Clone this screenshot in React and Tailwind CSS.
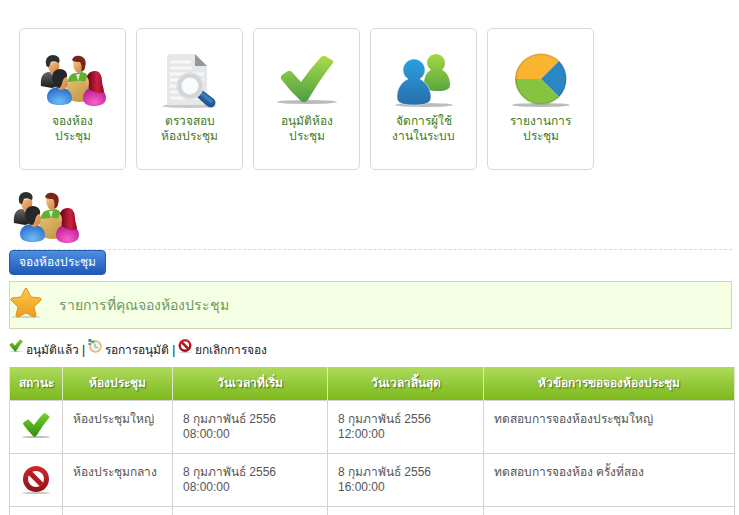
import { Fragment } from 'react'

const menuItems = [
  { icon: MeetingIcon, lines: ['จองห้อง', 'ประชุม'] },
  { icon: SearchDocIcon, lines: ['ตรวจสอบ', 'ห้องประชุม'] },
  { icon: CheckIcon, lines: ['อนุมัติห้อง', 'ประชุม'] },
  { icon: UsersIcon, lines: ['จัดการผู้ใช้', 'งานในระบบ'] },
  { icon: PieIcon, lines: ['รายงานการ', 'ประชุม'] },
]

const legend = [
  { icon: SmallCheckIcon, label: 'อนุมัติแล้ว' },
  { icon: ClockIcon, label: 'รอการอนุมัติ' },
  { icon: BlockIcon, label: 'ยกเลิกการจอง' },
]

const columns = [
  { label: 'สถานะ', width: 'w-[53px]' },
  { label: 'ห้องประชุม', width: 'w-[110px]' },
  { label: 'วันเวลาที่เริ่ม', width: 'w-[155px]' },
  { label: 'วันเวลาสิ้นสุด', width: 'w-[156px]' },
  { label: 'หัวข้อการขอจองห้องประชุม', width: '' },
]

const bookings = [
  {
    id: 1,
    status: 'approved',
    room: 'ห้องประชุมใหญ่',
    date: '8 กุมภาพันธ์ 2556',
    start: '08:00:00',
    end: '12:00:00',
    topic: 'ทดสอบการจองห้องประชุมใหญ่',
  },
  {
    id: 2,
    status: 'cancelled',
    room: 'ห้องประชุมกลาง',
    date: '8 กุมภาพันธ์ 2556',
    start: '08:00:00',
    end: '16:00:00',
    topic: 'ทดสอบการจองห้อง ครั้งที่สอง',
  },
]

function MeetingIcon({ className }) {
  return (
    <svg viewBox="0 0 66 52" className={className} aria-hidden="true">
      <defs>
        <linearGradient id="mSuit" x1="0" y1="0" x2="0" y2="1">
          <stop offset="0" stopColor="#666" />
          <stop offset="1" stopColor="#1c1c1c" />
        </linearGradient>
        <linearGradient id="mSkin" x1="0" y1="0" x2="1" y2="1">
          <stop offset="0" stopColor="#f9c98c" />
          <stop offset="1" stopColor="#c97a35" />
        </linearGradient>
        <radialGradient id="mBlue" cx="0.5" cy="0.8" r="0.75">
          <stop offset="0" stopColor="#6fbcf8" />
          <stop offset="1" stopColor="#2a6bca" />
        </radialGradient>
        <radialGradient id="mPink" cx="0.5" cy="0.8" r="0.75">
          <stop offset="0" stopColor="#f862cd" />
          <stop offset="1" stopColor="#b9188f" />
        </radialGradient>
        <linearGradient id="mTable" x1="0" y1="0" x2="1" y2="1">
          <stop offset="0" stopColor="#e2c173" />
          <stop offset="1" stopColor="#bd903d" />
        </linearGradient>
        <linearGradient id="mRed" x1="0" y1="0" x2="1" y2="0">
          <stop offset="0" stopColor="#5c0814" />
          <stop offset="0.6" stopColor="#cc2040" />
          <stop offset="1" stopColor="#8c0c20" />
        </linearGradient>
      </defs>
      {/* man at the back */}
      <path d="M1 31C0 22 3 18 8 17L19 18 21 30 12 33Z" fill="url(#mSuit)" />
      <path d="M10 16l4 8 4-8z" fill="#f4f4f4" />
      <path d="M7 8c1 6 3 11 7 11s6-5 5-12z" fill="url(#mSkin)" />
      <path d="M6 9C5 3 9 0 13 0c5 0 8 4 6 8-2-1-5-2-8-1-1 1-1 3-2 5-2 0-3-1-3-3z" fill="#2d2f31" />
      {/* woman at the back */}
      <path d="M28 27c0-6 4-9 8-9l6-1c5 1 8 5 6 10z" fill="#62b02f" />
      <path d="M36 19l2 7 2-7z" fill="#dff0cc" />
      <path d="M33 6c0 7 2 11 5 12 4-1 6-5 6-11z" fill="url(#mSkin)" />
      <path d="M32 5c1-4 5-5 8-4 5 1 7 6 5 11 0 3-2 4-4 5 1-4 1-7-1-10-3 0-6 0-8-2z" fill="#7a241a" />
      {/* table */}
      <path d="M25 29q12-6 26-1v17q-12 4-21 0z" fill="url(#mTable)" />
      {/* man in front */}
      <path d="M7 42c0-6 5-10 12-10s13 5 13 11-6 7-13 7-12-2-12-8z" fill="url(#mBlue)" />
      <path d="M20 20c5-1 8 2 8 7 0 4-3 7-6 8-3 0-5-2-5-5z" fill="url(#mSkin)" />
      <path d="M12 22c0-5 4-8 8-8 5 0 8 4 7 8-2 0-3 1-4 3s-1 7-4 8c-4-1-7-6-7-11z" fill="#252729" />
      {/* woman in front */}
      <path d="M46 24c1-3 3-4 6-4l1 14h-5c-2-3-3-6-2-10z" fill="url(#mSkin)" />
      <path d="M43 43c0-6 5-11 11-11 7 0 12 5 12 11s-6 8-12 8-11-2-11-8z" fill="url(#mPink)" />
      <path d="M47 22c1-4 4-6 8-6 5 0 7 5 7 10 0 4 2 7 2 11-4 2-8 1-12-1-3-1-4-3-3-7 0-3 0-5-2-7z" fill="url(#mRed)" />
    </svg>
  )
}

function SearchDocIcon({ className }) {
  return (
    <svg viewBox="0 0 66 56" className={className} aria-hidden="true">
      <ellipse cx="32" cy="53" rx="27" ry="2" fill="#c9c9c9" />
      <path d="M13 1h25l12 12v39H10V4q0-3 3-3z" fill="#e6e7e8" />
      <path d="M38 1l12 12H38z" fill="#94979a" />
      <path d="M13 9h21M13 15h22M13 21h34M13 27h34M13 33h34M13 39h34M13 45h34" stroke="#f8f8f8" strokeWidth="3" />
      <path d="M40 42l5-5 12 9q3 4 0 7t-7 0l-10-9z" fill="#235a9b" />
      <path d="M45 41l9 7" stroke="#3d7ab9" strokeWidth="4" strokeLinecap="round" />
      <circle cx="33" cy="33" r="11" fill="#fafbfc" stroke="#d3d6d9" strokeWidth="5" />
      <circle cx="33" cy="33" r="13" fill="none" stroke="#e4e6e8" strokeWidth="1" />
    </svg>
  )
}

function CheckIcon({ className }) {
  return (
    <svg viewBox="0 0 66 56" className={className} aria-hidden="true">
      <defs>
        <linearGradient id="cGreen" x1="0" y1="0" x2="0" y2="1">
          <stop offset="0" stopColor="#aadc48" />
          <stop offset="1" stopColor="#4c9c45" />
        </linearGradient>
      </defs>
      <ellipse cx="33" cy="49" rx="30" ry="2" fill="#bbb" />
      <path
        d="M7 26q-1-2 1-4l6-4q2-1 4 1l9 10Q36 16 47 4q2-2 4-1l7 4q2 1 1 3Q46 26 34 47q-4 4-7 1Q16 38 7 26z"
        fill="url(#cGreen)"
      />
    </svg>
  )
}

function UsersIcon({ className }) {
  return (
    <svg viewBox="0 0 66 56" className={className} aria-hidden="true">
      <defs>
        <linearGradient id="uGreen" x1="0" y1="0" x2="0" y2="1">
          <stop offset="0" stopColor="#a5d940" />
          <stop offset="1" stopColor="#58a53e" />
        </linearGradient>
        <linearGradient id="uBlue" x1="0" y1="0" x2="0" y2="1">
          <stop offset="0" stopColor="#2ba0dd" />
          <stop offset="1" stopColor="#286eac" />
        </linearGradient>
      </defs>
      <ellipse cx="33" cy="52" rx="29" ry="2" fill="#bbb" />
      <path
        d="M45 1c5 0 9 4 9 9 0 3-1 5-3 7 5 2 8 8 8 15 0 4-4 6-12 6s-14-2-14-6c0-7 2-13 7-15-2-2-4-4-4-7 0-5 4-9 9-9z"
        fill="url(#uGreen)"
      />
      <path
        d="M23 6c6 0 11 5 11 11 0 4-2 7-5 9 6 3 11 10 11 18 0 6-5 8-17 8S6 50 6 44c0-8 4-15 11-18-3-2-5-5-5-9 0-6 5-11 11-11z"
        fill="url(#uBlue)"
        stroke="#fff"
        strokeWidth=".5"
      />
    </svg>
  )
}

function PieIcon({ className }) {
  return (
    <svg viewBox="0 0 66 56" className={className} aria-hidden="true">
      <ellipse cx="33" cy="52" rx="29" ry="2" fill="#bbb" />
      <path d="M33 26H7A26 26 0 0 1 51 8z" fill="#f9b530" />
      <path d="M33 26L51 8a26 26 0 0 1 0 36z" fill="#2b86c5" />
      <path d="M33 26L51 44A26 26 0 0 1 7 26z" fill="#86c440" />
      <circle cx="33" cy="26" r="25" fill="none" stroke="#000" strokeOpacity=".1" strokeWidth="2" />
    </svg>
  )
}

function SmallCheckIcon({ className }) {
  return (
    <svg viewBox="0 0 28 26" className={className} aria-hidden="true">
      <defs>
        <linearGradient id="sGreen" x1="0" y1="0" x2="0" y2="1">
          <stop offset="0" stopColor="#7bd02c" />
          <stop offset="1" stopColor="#2f8f10" />
        </linearGradient>
      </defs>
      <ellipse cx="14" cy="24" rx="14" ry="1" fill="#bbb" />
      <path d="M1 11q0-1 1-2l3-2q1-1 2 0l5 5Q16 6 21 1l2-1 4 3q1 1 0 2-7 8-12 17-2 3-4 1Q5 17 1 11z" fill="url(#sGreen)" />
    </svg>
  )
}

function BlockIcon({ className }) {
  return (
    <svg viewBox="0 0 28 28" className={className} aria-hidden="true">
      <defs>
        <linearGradient id="bRed" x1="0" y1="0" x2="0" y2="1">
          <stop offset="0" stopColor="#d4262a" />
          <stop offset="1" stopColor="#8b1216" />
        </linearGradient>
      </defs>
      <ellipse cx="14" cy="27" rx="14" ry="1" fill="#c4c4c4" />
      <circle cx="14" cy="13" r="13" fill="url(#bRed)" />
      <circle cx="14" cy="13" r="8" fill="#fff" />
      <path d="M7 6l14 14" stroke="#b01d20" strokeWidth="5" />
    </svg>
  )
}

function ClockIcon({ className }) {
  return (
    <svg viewBox="0 0 28 28" className={className} aria-hidden="true">
      <circle cx="15" cy="15" r="11" fill="#e9f4f5" stroke="#f3b25c" strokeWidth="3" />
      <path d="M14 9v7l6 2" fill="none" stroke="#7fa6b0" strokeWidth="2" />
      <path d="M1 0h6v6H1zM1 8h4v4H1z" fill="#3d87c5" />
      <path d="M7 3h6v5H7z" fill="#62a83a" />
    </svg>
  )
}

function StarIcon({ className }) {
  return (
    <svg viewBox="0 0 32 32" className={className} aria-hidden="true">
      <defs>
        <linearGradient id="star" x1="0" y1="0" x2="0" y2="1">
          <stop offset="0" stopColor="#fdc94c" />
          <stop offset="1" stopColor="#ee9a1c" />
        </linearGradient>
      </defs>
      <ellipse cx="16" cy="30" rx="15" ry="1" fill="#cfd4c0" />
      <path
        d="M15 2q1-2 2 0l4 8 9 1q2 1 1 2l-7 7 2 8q0 2-2 2l-8-4-8 4q-2 0-2-2l2-8-7-7q-1-1 1-2l9-1z"
        fill="url(#star)"
        stroke="#dd9424"
        strokeWidth="1"
        strokeLinejoin="round"
      />
    </svg>
  )
}

export default function App() {
  return (
    <div className="h-screen overflow-hidden bg-white pl-[9px] font-['Liberation_Sans','Noto_Sans',sans-serif] text-xs leading-[15px] text-[#555]">
      <nav className="flex gap-[10px] px-[10px] pt-7">
        {menuItems.map(({ icon: Icon, lines }) => (
          <a
            key={lines.join('')}
            href="#"
            className="flex h-[142px] w-[107px] flex-col items-center rounded-[5px] border border-[#d9d9d9] pt-6 text-center text-[#3f7a1c]"
          >
            <Icon className="h-14 w-[66px]" />
            <span className="pt-[5px]">
              {lines[0]}
              <br />
              {lines[1]}
            </span>
          </a>
        ))}
      </nav>

      <main className="pr-1">
        <div className="mr-[3px] ml-1 border-b border-dashed border-[#d8d8d8] pt-[22px] pb-[5px]">
          <MeetingIcon className="h-[52px] w-[66px]" />
        </div>

        <button
          type="button"
          className="block h-[25px] rounded-[4px] border border-[#2459ad] bg-linear-to-b from-[#4d8fe0] to-[#2058b8] px-[9px] text-white"
        >
          จองห้องประชุม
        </button>

        <div className="mt-[6px] mr-[3px] flex h-12 items-center border border-[#c5dcab] bg-[#f5ffe3]">
          <StarIcon className="mb-1 size-8" />
          <h2 className="ml-[17px] text-sm leading-5 font-normal text-[#6f9659]">รายการที่คุณจองห้องประชุม</h2>
        </div>

        <div className="flex h-[38px] items-center gap-[3px] pt-1 text-[#222]">
          {legend.map(({ icon: Icon, label }, i) => (
            <Fragment key={label}>
              {i > 0 && <span>|</span>}
              <Icon className="mb-2 size-[14px]" />
              <span>{label}</span>
            </Fragment>
          ))}
        </div>

        <table className="w-full table-fixed border-collapse">
          <thead>
            <tr className="h-[33px] bg-linear-to-b from-[#b0da5c] via-[#94c93a] to-[#7db91a] text-white">
              {columns.map((col) => (
                <th
                  key={col.label}
                  className={`${col.width} border-x border-[#dce8c8] p-0 font-bold text-shadow-[1px_1px_1px_#4a6b1c]`}
                >
                  {col.label}
                </th>
              ))}
            </tr>
          </thead>
          <tbody>
            {bookings.map((b) => (
              <tr key={b.id} className="h-[53px] align-top">
                <td className="border border-[#d3d3d3] pt-3">
                  {b.status === 'approved' ? (
                    <SmallCheckIcon className="mx-auto h-[26px] w-7" />
                  ) : (
                    <BlockIcon className="mx-auto size-7" />
                  )}
                </td>
                <td className="border border-[#d3d3d3] px-[10px] pt-[11px]">{b.room}</td>
                <td className="border border-[#d3d3d3] px-[10px] pt-[11px]">
                  {b.date}
                  <br />
                  {b.start}
                </td>
                <td className="border border-[#d3d3d3] px-[10px] pt-[11px]">
                  {b.date}
                  <br />
                  {b.end}
                </td>
                <td className="border border-[#d3d3d3] px-[10px] pt-[11px]">{b.topic}</td>
              </tr>
            ))}
            <tr className="h-[53px]">
              {columns.map((col) => (
                <td key={col.label} className="border border-[#d3d3d3]" />
              ))}
            </tr>
          </tbody>
        </table>
      </main>
    </div>
  )
}
